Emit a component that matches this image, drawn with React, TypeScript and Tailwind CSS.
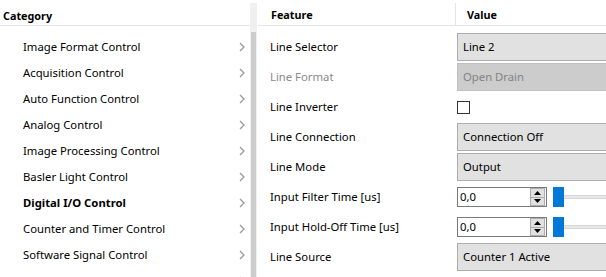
import React from "react";

const cats = [
  "Image Format Control",
  "Acquisition Control",
  "Auto Function Control",
  "Analog Control",
  "Image Processing Control",
  "Basler Light Control",
  "Digital I/O Control",
  "Counter and Timer Control",
  "Software Signal Control",
  "Chunk Data Control",
];

function Chevron() {
  return (
    <svg width="6" height="10" viewBox="0 0 6 10" className="shrink-0">
      <path d="M1 1 L5 5 L1 9" fill="none" stroke="#9a9a9a" strokeWidth="1.3" />
    </svg>
  );
}

function Combo({ text, disabled }: { text: string; disabled?: boolean }) {
  return (
    <div
      className={
        disabled
          ? "h-[28px] w-[160px] shrink-0 border border-[#bfbfbf] bg-[#cccccc] text-[#838383] flex items-center pl-[5px]"
          : "h-[28px] w-[160px] shrink-0 border border-[#adadad] bg-[#e1e1e1] text-black flex items-center pl-[5px]"
      }
    >
      {text}
    </div>
  );
}

function Spin() {
  return (
    <div className="flex items-center w-[170px]">
      <div className="h-[20px] w-[90px] shrink-0 border border-[#7a7a7a] bg-white flex items-center justify-between pl-[2px] pr-[1px]">
        <span className="text-black">0,0</span>
        <div className="flex flex-col w-[15px] h-[18px]">
          <div className="flex-1 bg-[#e1e1e1] border border-[#adadad] flex items-center justify-center">
            <svg width="7" height="4" viewBox="0 0 7 4">
              <path d="M3.5 0 L7 4 L0 4 Z" fill="#000" />
            </svg>
          </div>
          <div className="flex-1 bg-[#e1e1e1] border border-t-0 border-[#adadad] flex items-center justify-center">
            <svg width="7" height="4" viewBox="0 0 7 4">
              <path d="M0 0 L7 0 L3.5 4 Z" fill="#000" />
            </svg>
          </div>
        </div>
      </div>
      <div className="ml-[6px] flex items-center shrink-0">
        <div className="w-[11px] h-[20px] bg-[#0078d7]" />
        <div className="w-[60px] h-[4px] bg-[#e7e7e7] border-y border-[#d6d6d6]" />
      </div>
    </div>
  );
}

const rows: { label: string; disabled?: boolean; value: React.ReactNode }[] = [
  { label: "Line Selector", value: <Combo text="Line 2" /> },
  { label: "Line Format", disabled: true, value: <Combo text="Open Drain" disabled /> },
  {
    label: "Line Inverter",
    value: <div className="w-[13px] h-[13px] border border-[#333333] bg-white" />,
  },
  { label: "Line Connection", value: <Combo text="Connection Off" /> },
  { label: "Line Mode", value: <Combo text="Output" /> },
  { label: "Input Filter Time [us]", value: <Spin /> },
  { label: "Input Hold-Off Time [us]", value: <Spin /> },
  { label: "Line Source", value: <Combo text="Counter 1 Active" /> },
];

export default function App() {
  return (
    <div
      className="flex w-[606px] h-[277px] overflow-hidden bg-white text-[11.3px] text-black"
      style={{ fontFamily: '"Noto Sans", sans-serif' }}
    >
      {/* Left panel */}
      <div className="w-[250px] shrink-0 flex flex-col">
        <div className="h-[26px] shrink-0 border-b border-[#e5e5e5] flex items-center pl-[3px] pt-[8px] font-bold text-[10.8px]">
          Category
        </div>
        <div className="flex flex-col pt-[7px]">
          {cats.map((c) => (
            <div key={c} className="h-[26px] shrink-0 flex items-center justify-between pl-[23px] pr-[5px] pt-[2px]">
              <span className={c === "Digital I/O Control" ? "font-bold" : ""}>{c}</span>
              <Chevron />
            </div>
          ))}
        </div>
      </div>
      {/* Scrollbar */}
      <div className="w-[7px] shrink-0 mt-[3px] bg-[#f0f0f0] flex flex-col">
        <div className="mt-[29px] mx-[1px] h-[260px] bg-[#cdcdcd]" />
      </div>
      <div className="w-[1px] shrink-0" />
      {/* Right panel */}
      <div className="flex-1 flex flex-col min-w-0">
        <div className="h-[26px] shrink-0 border-b border-[#e5e5e5] flex items-stretch font-bold text-[10.8px]">
          <div className="w-[198px] shrink-0 flex items-center pl-[13px] pt-[3px] border-r border-[#e5e5e5] mt-[3px]">
            Feature
          </div>
          <div className="flex items-center pl-[11px] pt-[6px]">Value</div>
        </div>
        <div className="flex flex-col pt-[6px]">
          {rows.map((r) => (
            <div key={r.label} className="h-[30px] shrink-0 flex items-center">
              <div
                className={
                  "w-[199px] shrink-0 pl-[12px] pt-[1px] " + (r.disabled ? "text-[#8a8a8a]" : "text-black")
                }
              >
                {r.label}
              </div>
              <div className="flex-1 min-w-0 overflow-hidden">{r.value}</div>
            </div>
          ))}
        </div>
      </div>
    </div>
  );
}
